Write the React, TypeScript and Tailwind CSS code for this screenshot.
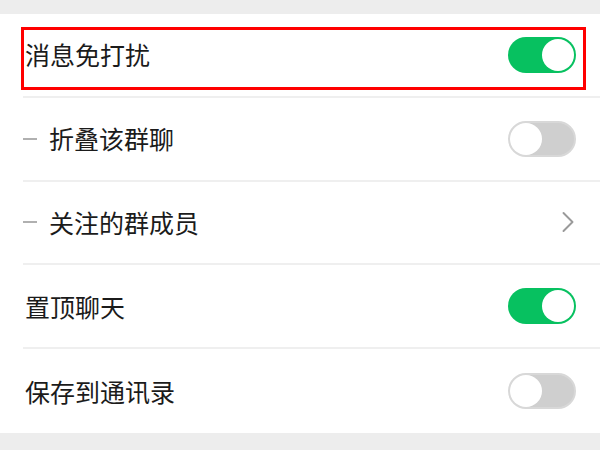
import { ChevronRight } from "lucide-react";

type Row = {
  label: string;
  sub?: boolean;
  kind: "on" | "off" | "arrow";
  marked?: boolean;
};

const rows: Row[] = [
  { label: "消息免打扰", kind: "on", marked: true },
  { label: "折叠该群聊", sub: true, kind: "off" },
  { label: "关注的群成员", sub: true, kind: "arrow" },
  { label: "置顶聊天", kind: "on" },
  { label: "保存到通讯录", kind: "off" },
];

function Toggle({ on }: { on: boolean }) {
  return on ? (
    <div className="w-[68px] h-[36px] rounded-full bg-[#07c160] flex items-center justify-end p-[2px]">
      <div className="w-[32px] h-[32px] rounded-full bg-white" />
    </div>
  ) : (
    <div className="w-[68px] h-[36px] rounded-full bg-[#cfcfcf] border-2 border-[#d8d8d8] flex items-center justify-start">
      <div className="w-[32px] h-[32px] rounded-full bg-white" />
    </div>
  );
}

export default function App() {
  return (
    <div
      className="w-[600px] h-[450px] bg-[#ededed] flex flex-col overflow-hidden"
      style={{ fontFamily: '"Noto Sans CJK SC", "Noto Sans", sans-serif' }}
    >
      <div className="h-[14px] shrink-0" />
      <div className="bg-white flex flex-col h-[419px]">
        {rows.map((r, i) => (
          <div key={r.label} className="relative pl-[23px] flex-1 flex flex-col">
            <div className="flex-1 flex items-center pr-[24px]">
              {r.sub && <div className="w-[14px] h-[2px] bg-[#b0b0b0] mr-[12px]" />}
              <span className={`text-[25px] text-[#1b1b1b] leading-none ${r.sub ? "" : "ml-[2px]"}`}>
                {r.label}
              </span>
              <div className="ml-auto flex items-center">
                {r.kind === "arrow" ? (
                  <ChevronRight className="w-[36px] h-[36px] text-[#9a9a9a] -mr-[10px]" strokeWidth={1.3} />
                ) : (
                  <Toggle on={r.kind === "on"} />
                )}
              </div>
            </div>
            {i < rows.length - 1 && <div className="h-[2px] bg-[#efefef]" />}
            {r.marked && (
              <div className="absolute left-[21px] top-[13px] w-[565px] h-[63px] border-[3px] border-[#ff0000]" />
            )}
          </div>
        ))}
      </div>
    </div>
  );
}
